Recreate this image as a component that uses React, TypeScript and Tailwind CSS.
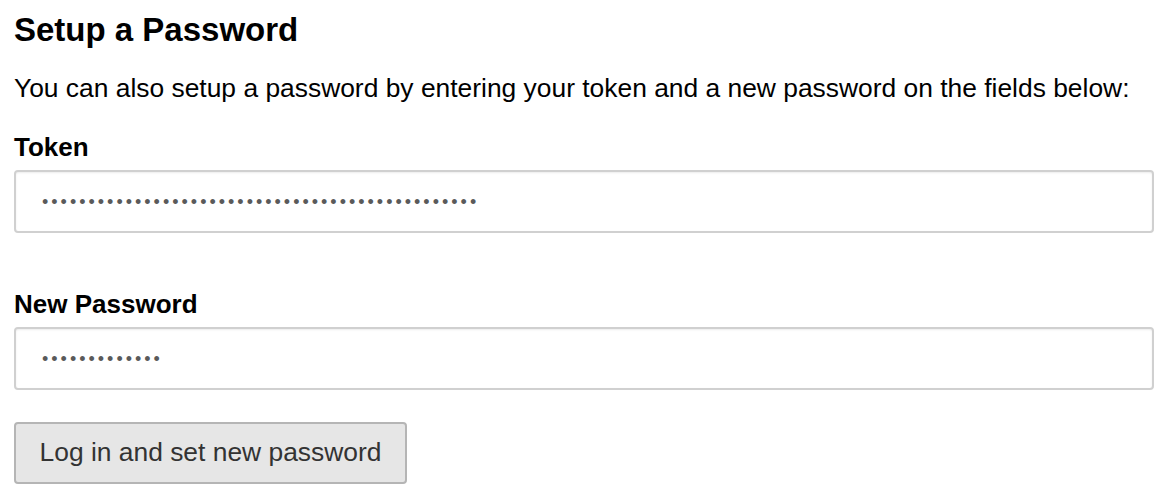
const FONT = "font-['Liberation_Sans',Arial,Helvetica,sans-serif]";

function MaskedField({ count }: { count: number }) {
  return (
    <div className="flex h-[63px] w-full items-center rounded-[4px] border-2 border-[#d0d0d0] bg-white pl-[26px] shadow-[inset_0_1px_2px_rgba(0,0,0,0.08)]">
      <span className="text-[18px] leading-none tracking-[3px] text-[#5a5a5a]">{'•'.repeat(count)}</span>
    </div>
  );
}

export default function App() {
  return (
    <div className={`${FONT} min-h-[502px] w-[1176px] bg-white px-[14px] text-black`}>
      <div className="flex w-[1140px] flex-col">
        <h2 className="mt-[11px] text-[33px] font-bold leading-[38px]">Setup a Password</h2>
        <p className="mt-[24px] text-[26.4px] leading-[30px]">
          You can also setup a password by entering your token and a new password on the fields below:
        </p>
        <label className="mt-[29px] text-[26px] font-bold leading-[30px]">Token</label>
        <div className="mt-[8px]">
          <MaskedField count={47} />
        </div>
        <label className="mt-[56px] text-[26px] font-bold leading-[30px]">New Password</label>
        <div className="mt-[8px]">
          <MaskedField count={13} />
        </div>
        <div className="mt-[32px]">
          <button className="flex h-[62px] w-[393px] items-center justify-center rounded-[4px] border-2 border-[#b5b5b5] bg-[#e6e6e6] text-[26.4px] text-[#333]">
            Log in and set new password
          </button>
        </div>
      </div>
    </div>
  );
}
